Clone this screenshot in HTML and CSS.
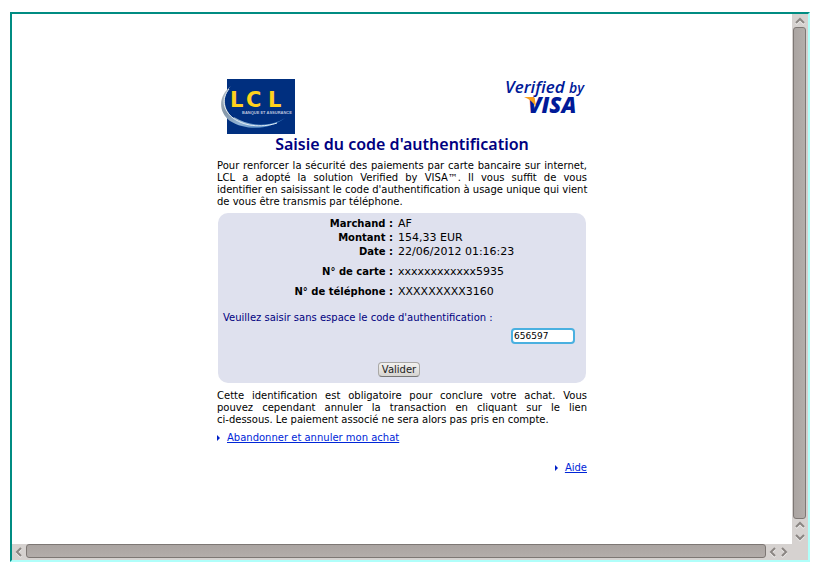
FILE: index.html
```html
<!DOCTYPE html>
<html lang="fr">
<head>
<meta charset="utf-8">
<title>Saisie du code d'authentification</title>
<link rel="stylesheet" href="styles.css">
</head>
<body>
<div class="frame">
  <main class="view">
    <div class="page">
      <header class="logos">
        <svg class="lcl" width="74" height="55" viewBox="0 0 74 55" role="img" aria-label="LCL Banque et Assurance">
          <defs>
            <linearGradient id="swoosh" x1="0" y1="0" x2="1" y2="1">
              <stop offset="0" stop-color="#b9c0c6"/>
              <stop offset=".35" stop-color="#8798a8"/>
              <stop offset=".6" stop-color="#8fb2d6"/>
              <stop offset="1" stop-color="#1a64b4"/>
            </linearGradient>
          </defs>
          <rect x="6" width="68" height="55" fill="#002f7f"/>
          <path d="M10 7C-2 16-4 32 9 42C25 52 49 51 64 39C50 48 28 48 13 38C3 30 2 17 10 7Z" fill="url(#swoosh)"/>
          <path d="M10 7C1 16 2 30 12 39L20 34V7Z" fill="#002f7f"/>
          <path d="M8 10C0 20 2 31 12 39C26 49 44 48 56 44" fill="none" stroke="#e4edf4"/>
          <text class="lcl-name" y="28"><tspan x="9">L</tspan><tspan x="25">C</tspan><tspan x="47">L</tspan></text>
          <text class="lcl-tag" x="21" y="35">BANQUE ET ASSURANCE</text>
        </svg>
        <svg class="visa" width="84" height="40" viewBox="0 0 84 40" role="img" aria-label="Verified by VISA">
          <text class="visa-top" x="2" y="14">Verified</text>
          <text class="visa-by" x="66" y="14">by</text>
          <text class="visa-name" x="25" y="34">VISA</text>
          <path d="M21 18H30Q32 18 32 21L33 28Q29 21 21 18Z" fill="#f8a01c"/>
        </svg>
      </header>
      <h1>Saisie du code d'authentification</h1>
      <p class="text"><span class="line">Pour renforcer la sécurité des paiements par carte bancaire sur internet,</span> <span class="line">LCL a adopté la solution Verified by VISA™. Il vous suffit de vous</span> <span class="line">identifier en saisissant le code d'authentification à usage unique qui vient</span> de vous être transmis par téléphone.</p>
      <form class="panel">
        <dl>
          <dt>Marchand :</dt><dd>AF</dd>
          <dt>Montant :</dt><dd>154,33 EUR</dd>
          <dt>Date :</dt><dd>22/06/2012 01:16:23</dd>
          <dt class="spaced">N° de carte :</dt><dd class="spaced">xxxxxxxxxxxx5935</dd>
          <dt class="spaced">N° de téléphone :</dt><dd class="spaced">XXXXXXXXX3160</dd>
        </dl>
        <label for="code">Veuillez saisir sans espace le code d'authentification :</label>
        <input id="code" type="text" value="656597">
        <button type="button">Valider</button>
      </form>
      <p class="text">Cette identification est obligatoire pour conclure votre achat. Vous pouvez cependant annuler la transaction en cliquant sur le lien <span class="whole">ci-dessous.</span> Le paiement associé ne sera alors pas pris en compte.</p>
      <p class="link"><a href="#">Abandonner et annuler mon achat</a></p>
      <p class="link help"><a href="#">Aide</a></p>
    </div>
  </main>
  <div class="bar vertical">
    <svg width="16" height="13" viewBox="0 0 16 13"><path class="shine" d="M4 10L8 6L12 10"/><path d="M4 9L8 5L12 9"/></svg>
    <div class="thumb"></div>
    <svg width="16" height="12" viewBox="0 0 16 12"><path class="shine" d="M4 9L8 5L12 9"/><path d="M4 8L8 4L12 8"/></svg>
    <svg width="16" height="13" viewBox="0 0 16 13"><path class="shine" d="M4 5L8 9L12 5"/><path d="M4 4L8 8L12 4"/></svg>
  </div>
  <div class="bar horizontal">
    <svg width="14" height="16" viewBox="0 0 14 16"><path class="shine" d="M9 5L5 9L9 13"/><path d="M9 4L5 8L9 12"/></svg>
    <div class="thumb"></div>
    <svg width="12" height="16" viewBox="0 0 12 16"><path class="shine" d="M9 5L5 9L9 13"/><path d="M9 4L5 8L9 12"/></svg>
    <svg width="14" height="16" viewBox="0 0 14 16"><path class="shine" d="M4 5L8 9L4 13"/><path d="M4 4L8 8L4 12"/></svg>
  </div>
  <div class="corner"></div>
</div>
</body>
</html>
```

FILE: styles.css
```css
* { box-sizing: border-box; }

body {
  margin: 0;
  padding: 12px 11px 8px 10px;
  min-height: 100vh;
  display: flex;
  background: #fff;
  color: #000;
  font: 10px/12px "DejaVu Sans", sans-serif;
}

.frame {
  flex: 1;
  display: grid;
  grid-template-columns: 1fr 16px;
  grid-template-rows: 1fr 16px;
  border: 2px solid;
  border-color: #008c82 #b0fffa #b0fffa #008c82;
}

.page {
  width: 370px;
  max-width: 100%;
  margin: 0 auto;
  padding-top: 65px;
}

.logos {
  display: flex;
  justify-content: space-between;
  height: 55px;
  padding: 0 0 0 4px;
}

.logos svg { overflow: visible; }

.lcl-name {
  font: bold 21px "DejaVu Sans", sans-serif;
  fill: #ffd21c;
}

.lcl-tag {
  font: bold 4px "Liberation Sans", sans-serif;
  fill: #b9c3de;
}

.visa-top,
.visa-by,
.visa-name {
  font: italic 600 17px "Open Sans", sans-serif;
  fill: #001a98;
}

.visa-by { font-size: 14px; }

.visa-name {
  font-size: 22px;
  font-weight: 800;
}

h1 {
  margin: 0;
  font: 600 16px/20px "Noto Sans", sans-serif;
  text-align: center;
  color: #000080;
}

.text {
  margin: 6px 0 5px;
  text-align: justify;
}

.line {
  display: block;
  white-space: nowrap;
  text-align-last: justify;
}

.whole { white-space: nowrap; }

.panel {
  display: flex;
  flex-direction: column;
  margin: 0 1px;
  padding: 4px 11px 6px 5px;
  border-radius: 10px;
  background: #dfe1ee;
}

dl {
  display: grid;
  grid-template-columns: 170px 1fr;
  column-gap: 5px;
  margin: 0 0 13px;
  line-height: 14px;
}

dt {
  font-weight: bold;
  text-align: right;
}

dd {
  margin: 0;
  font-size: 11px;
}

.spaced { margin-top: 6px; }

label {
  margin-bottom: 4px;
  color: #000080;
}

input {
  align-self: flex-end;
  width: 64px;
  height: 16px;
  padding: 0 1px;
  border: 2px solid #4ab0e0;
  border-radius: 4px;
  outline: 0;
  background: #fff;
  color: #000;
  font: 9px "DejaVu Sans", sans-serif;
}

button {
  align-self: center;
  margin: 18px 0 0;
  height: 15px;
  padding: 0 3px;
  border: 1px solid #aaa8a6;
  border-bottom-color: #777;
  border-radius: 4px;
  background: linear-gradient(#f2f1ef, #d6d4d1);
  color: #222;
  font: 10px/12px "DejaVu Sans", sans-serif;
}

.panel + .text { margin: 7px 0 6px; }

.link {
  display: flex;
  align-items: center;
  gap: 7px;
  margin: 0;
}

.link::before {
  content: "";
  border: 3px solid transparent;
  border-left-color: #0020c8;
  border-right: 0;
}

.link a { color: #0026d8; }

.help {
  justify-content: flex-end;
  margin-top: 18px;
}

.bar,
.corner { background: #d6d2d0; }

.bar { display: flex; }

.vertical { flex-direction: column; }

.thumb {
  flex: 1;
  border: 1px solid #7d7774;
  border-radius: 3px;
}

.vertical .thumb {
  margin: 0 2px 0 1px;
  background: linear-gradient(90deg, #aaa4a1, #b3adaa);
}

.horizontal .thumb {
  margin: 0 0 2px;
  background: linear-gradient(#aaa4a1, #b3adaa);
}

.bar path {
  fill: none;
  stroke: #8a8582;
  stroke-width: 2;
}

.bar .shine { stroke: #f4f3f2; }
```
